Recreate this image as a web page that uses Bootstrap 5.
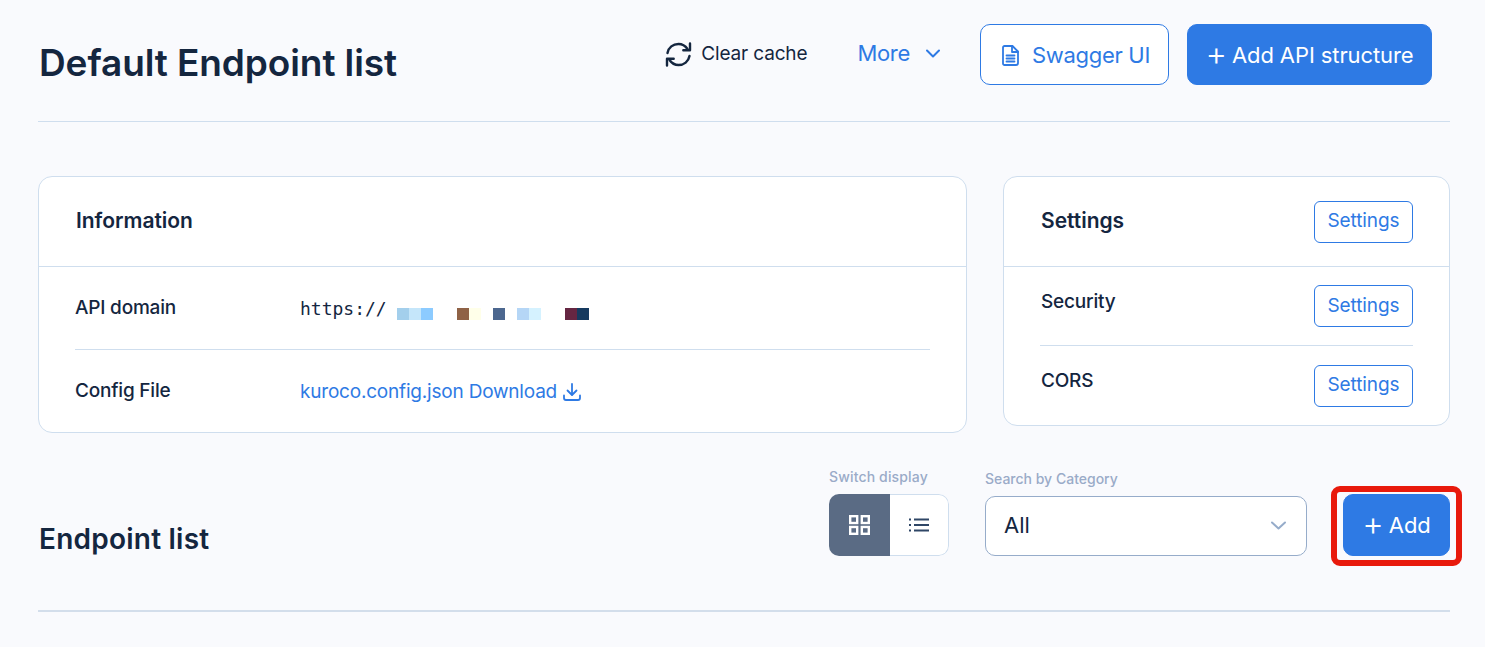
<!doctype html>
<html lang="en">
<head>
<meta charset="utf-8">
<title>Default Endpoint list</title>
<link href="https://cdn.jsdelivr.net/npm/bootstrap@5.3.0/dist/css/bootstrap.min.css" rel="stylesheet">
<style>
:root{--ink:#14263f;--blue:#2e7ae4;--line:#cfdeee;--muted:#9aabc8}
html,body{height:647px;overflow:hidden}
body{background:#f9fafd;color:var(--ink);font-family:Inter,"Liberation Sans",sans-serif}
.page-wrap{padding:24px 35px 0 38px}
.head-row{height:98px;border-bottom:1px solid var(--line);padding-bottom:36px}
.page-title{font-size:37px;font-weight:600;letter-spacing:-.1px;margin:0;line-height:78px;padding-left:1px}
.btn-blue,.btn-line{border-radius:10px;font-size:22px;display:inline-flex;align-items:center;justify-content:center;font-weight:400;letter-spacing:-.1px}
.btn-blue{background:var(--blue);border:1px solid var(--blue);color:#fff}
.btn-line{background:#fff;border:1px solid var(--blue);color:var(--blue)}
.plus-sign{font-size:33px;font-weight:300;line-height:1;margin-right:5px;margin-top:-5px}
.btn-api{width:245px;height:61px;margin-left:18px;padding-top:2px}
.btn-swagger{width:189px;height:61px;margin-left:40px;gap:13px;justify-content:flex-start;padding:2px 0 0 21px;letter-spacing:-.3px}
.link-clear{font-size:19px;color:var(--ink);gap:9px;text-decoration:none;height:60px;letter-spacing:-.15px}
.link-more{color:var(--blue);font-size:22px;margin-left:50px;gap:16px;text-decoration:none;height:58px;letter-spacing:-.3px}
.cards-row{margin-top:54px;gap:36px}
.panel-main,.panel-side{background:#fff;border:1px solid var(--line);border-radius:14px}
.panel-main{width:929px;height:257px}
.panel-side{width:447px;height:250px}
.panel-top{height:90px;border-bottom:1px solid var(--line);padding:0 36px 0 37px}
.panel-title{font-size:21px;font-weight:600;margin:0;letter-spacing:-.02px;padding-bottom:2px}
.info-row{margin:0 36px;height:82px;font-size:18px}
.info-row+.info-row{border-top:1px solid var(--line);height:83px}
.info-label{width:225px;font-weight:550;letter-spacing:-.2px;font-size:19px}
.mono-text{font-family:"DejaVu Sans Mono","Liberation Mono",monospace;font-size:18px;line-height:1;padding-top:2px}
.mask-strip{display:grid;grid-template-columns:repeat(16,12px);height:12px;margin:12px 0 0 10px}
.config-link{color:var(--blue);text-decoration:none;font-size:19px;letter-spacing:-.2px;gap:6px;padding-top:2px}
.side-row{padding:0 36px 0 37px;height:78px}
.side-row.last-row{height:79px}
.side-divide{margin:0 36px;border-top:1px solid var(--line)}
.btn-set{width:99px;height:42px;font-size:19px;border-radius:6px;letter-spacing:-.1px}
.side-label{font-size:19px;font-weight:550;letter-spacing:-.2px;margin-bottom:8px}
.list-head{margin-top:50px;height:129px;border-bottom:2px solid #d3deeb;padding-bottom:54px}
.list-title{font-size:28px;font-weight:600;letter-spacing:.23px;margin:0;padding:0 0 3px 1px;line-height:1;align-self:flex-end}
.field-label{font-size:14px;color:var(--muted);font-weight:500;line-height:17px}
.field-label.wide-label{letter-spacing:.15px}
.toggle-box{width:120px;height:62px;margin-top:9px;border-radius:10px;overflow:hidden}
.toggle-on{width:61px;background:#5a6b84;color:#fff}
.toggle-off{flex:1;color:#2f4666;background:#fff;border:1px solid var(--line);border-left:0;border-radius:0 10px 10px 0}
.pick-wrap{margin-left:36px}
.pick-box{width:322px;height:60px;margin-top:9px;border:1px solid #96acca;border-radius:10px;background:#fff;font-size:22px;padding:0 20px 2px 18px;color:var(--ink)}
.add-wrap{margin-left:36px;width:107px}
.btn-add{width:107px;height:62px;padding-top:1px}
.mark-frame{position:absolute;left:-12px;right:-12px;top:-8px;bottom:-10px;border:6px solid #e81a0c;border-radius:9px;pointer-events:none}
</style>
</head>
<body>
<div class="page-wrap">
  <div class="head-row d-flex align-items-start justify-content-between">
    <h1 class="page-title">Default Endpoint list</h1>
    <div class="d-flex align-items-start" style="margin-right:18px">
      <a href="#" class="link-clear d-inline-flex align-items-center">
        <svg width="27" height="25" viewBox="0 0 27 25" fill="none" stroke="#14263f" stroke-width="2.4" stroke-linecap="round" stroke-linejoin="round"><path d="M2.500 11C3.500 5.500 8 2 13.500 2c3.700 0 6.700 1.700 9 5"/><path d="M25 1.500v6.700h-6.700"/><path d="M24.500 14c-1 5.500-5.500 9-11 9-3.700 0-6.700-1.700-9-5"/><path d="M2 23.500v-6.700h6.700"/></svg>
        <span>Clear cache</span>
      </a>
      <a href="#" class="link-more d-inline-flex align-items-center">
        <span>More</span>
        <svg width="14" height="9" viewBox="0 0 14 9" fill="none" stroke="#2e7ae4" stroke-width="2" stroke-linecap="round" stroke-linejoin="round"><path d="M1 1.500l6 6 6-6"/></svg>
      </a>
      <a href="#" class="btn-line btn-swagger text-decoration-none">
        <svg width="17" height="21" viewBox="0 0 17 21" fill="none" stroke="#2e7ae4" stroke-width="1.800" stroke-linejoin="round" stroke-linecap="round"><path d="M2.500 1h8l5.500 5.500v11.500a2 2 0 0 1-2 2H2.500a1.500 1.500 0 0 1-1.500-1.500V2.500A1.500 1.500 0 0 1 2.500 1z"/><path d="M10 1v6h6"/><path d="M4.500 10.500h8M4.500 13.500h8M4.500 16.500h8"/></svg>
        <span>Swagger UI</span>
      </a>
      <a href="#" class="btn-blue btn-api text-decoration-none"><span class="plus-sign">+</span><span>Add API structure</span></a>
    </div>
  </div>

  <div class="cards-row d-flex align-items-start">
    <section class="panel-main">
      <div class="panel-top d-flex align-items-center"><h2 class="panel-title">Information</h2></div>
      <div class="info-row d-flex align-items-center">
        <div class="info-label">API domain</div>
        <div class="d-flex align-items-center">
          <span class="mono-text">https://</span>
          <span class="mask-strip" aria-hidden="true">
            <i style="background:#a3cfec"></i><i style="background:#c5e6fa"></i><i style="background:#8ccbff"></i><i></i><i></i><i style="background:#8f6246"></i><i style="background:#ffffe9"></i><i></i><i style="background:#4c678f"></i><i></i><i style="background:#b5d6f6"></i><i style="background:#d5f2ff"></i><i></i><i></i><i style="background:#652642"></i><i style="background:#163a5f"></i>
          </span>
        </div>
      </div>
      <div class="info-row d-flex align-items-center">
        <div class="info-label">Config File</div>
        <a href="#" class="config-link d-inline-flex align-items-center">
          <span>kuroco.config.json Download</span>
          <svg width="18" height="18" viewBox="0 0 18 18" fill="none" stroke="#2e7ae4" stroke-width="1.800" stroke-linecap="round" stroke-linejoin="round"><path d="M9 1v10.500"/><path d="M4.500 7.500L9 12l4.500-4.500"/><path d="M1 12.500v2.500A2 2 0 0 0 3 17h12a2 2 0 0 0 2-2v-2.500"/></svg>
        </a>
      </div>
    </section>

    <aside class="panel-side">
      <div class="panel-top d-flex align-items-center justify-content-between">
        <h2 class="panel-title">Settings</h2>
        <a href="#" class="btn-line btn-set text-decoration-none">Settings</a>
      </div>
      <div class="side-row d-flex align-items-center justify-content-between">
        <span class="side-label">Security</span>
        <a href="#" class="btn-line btn-set text-decoration-none">Settings</a>
      </div>
      <div class="side-divide"></div>
      <div class="side-row last-row d-flex align-items-center justify-content-between">
        <span class="side-label">CORS</span>
        <a href="#" class="btn-line btn-set text-decoration-none">Settings</a>
      </div>
    </aside>
  </div>

  <div class="list-head d-flex align-items-end justify-content-between">
    <h2 class="list-title">Endpoint list</h2>
    <div class="d-flex align-items-end">
      <div>
        <div class="field-label wide-label">Switch display</div>
        <div class="toggle-box d-flex">
          <div class="toggle-on d-flex align-items-center justify-content-center">
            <svg width="21" height="20" viewBox="0 0 21 20" fill="none" stroke="#fff" stroke-width="2.400"><rect x="1.200" y="1.200" width="7" height="6.800"/><rect x="12.800" y="1.200" width="7" height="6.800"/><rect x="1.200" y="12" width="7" height="6.800"/><rect x="12.800" y="12" width="7" height="6.800"/></svg>
          </div>
          <div class="toggle-off d-flex align-items-center justify-content-center">
            <svg width="20" height="14" viewBox="0 0 20 14" fill="none" stroke="#2f4666" stroke-width="1.800"><path d="M5 1.500h15M5 7h15M5 12.500h15"/><path d="M0 1.500h2M0 7h2M0 12.500h2"/></svg>
          </div>
        </div>
      </div>
      <div class="pick-wrap">
        <div class="field-label">Search by Category</div>
        <div class="pick-box d-flex align-items-center justify-content-between">
          <span>All</span>
          <svg width="15" height="9" viewBox="0 0 15 9" fill="none" stroke="#96acca" stroke-width="2" stroke-linecap="round" stroke-linejoin="round"><path d="M1 1.500l6.500 6 6.500-6"/></svg>
        </div>
      </div>
      <div class="add-wrap position-relative">
        <a href="#" class="btn-blue btn-add text-decoration-none"><span class="plus-sign">+</span><span>Add</span></a>
        <div class="mark-frame"></div>
      </div>
    </div>
  </div>
</div>
<script src="https://cdn.jsdelivr.net/npm/bootstrap@5.3.0/dist/js/bootstrap.bundle.min.js"></script>
</body>
</html>
